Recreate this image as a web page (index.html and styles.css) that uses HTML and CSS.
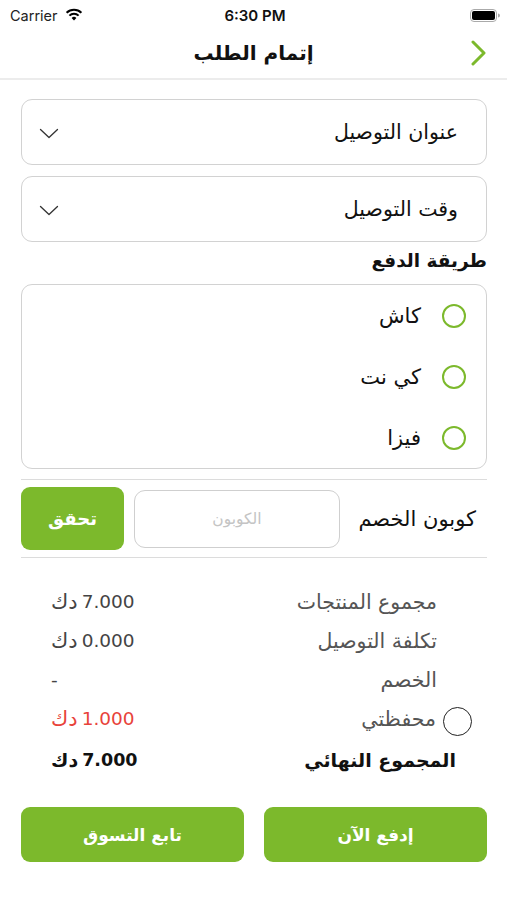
FILE: index.html
```html
<!DOCTYPE html>
<html lang="ar">
<head>
<meta charset="utf-8">
<link rel="stylesheet" href="styles.css">
</head>
<body>
<div class="status">
  <div class="st-left"><span class="carrier">Carrier</span>
    <svg class="wifi" width="18" height="13" viewBox="0 0 18 13"><path d="M9 12.5 L6.6 9.9 A3.4 3.4 0 0 1 11.4 9.9 Z" fill="#000"/><path d="M4.4 7.6 A6.6 6.6 0 0 1 13.6 7.6" stroke="#000" stroke-width="2" fill="none"/><path d="M1.6 4.8 A10.6 10.6 0 0 1 16.4 4.8" stroke="#000" stroke-width="2" fill="none"/></svg>
  </div>
  <div class="time">6:30 PM</div>
  <div class="st-right">
    <svg width="30" height="13" viewBox="0 0 30 13"><rect x="0.5" y="0.5" width="26" height="12" rx="3.5" fill="none" stroke="#aaa"/><rect x="2" y="2" width="23" height="9" rx="2" fill="#000"/><path d="M28 4.5 v4 a1.5 1.5 0 0 0 0 -4z" fill="#aaa"/></svg>
  </div>
</div>
<div class="nav" dir="rtl">
  <svg class="back" width="16" height="26" viewBox="0 0 16 26"><path d="M2 2 L13 13 L2 24" stroke="#7cb92c" stroke-width="3" fill="none" stroke-linecap="round" stroke-linejoin="round"/></svg>
  <h1 class="title">إتمام الطلب</h1>
</div>
<main class="content" dir="rtl">
  <div class="select"><span>عنوان التوصيل</span>
    <svg width="20" height="11" viewBox="0 0 20 11"><path d="M1.5 1.5 L10 9.5 L18.5 1.5" stroke="#333" stroke-width="1.3" fill="none" stroke-linecap="round" stroke-linejoin="round"/></svg>
  </div>
  <div class="select"><span>وقت التوصيل</span>
    <svg width="20" height="11" viewBox="0 0 20 11"><path d="M1.5 1.5 L10 9.5 L18.5 1.5" stroke="#333" stroke-width="1.3" fill="none" stroke-linecap="round" stroke-linejoin="round"/></svg>
  </div>
  <h2 class="section">طريقة الدفع</h2>
  <div class="paybox">
    <div class="payrow"><span class="radio"></span><span>كاش</span></div>
    <div class="payrow"><span class="radio"></span><span>كي نت</span></div>
    <div class="payrow"><span class="radio"></span><span>فيزا</span></div>
  </div>
  <div class="coupon">
    <span class="coupon-label">كوبون الخصم</span>
    <div class="coupon-input">الكوبون</div>
    <button class="btn check">تحقق</button>
  </div>
  <div class="summary">
    <div class="row"><span>مجموع المنتجات</span><span class="val"><span class="num">7.000</span><span class="cur">دك</span></span></div>
    <div class="row"><span>تكلفة التوصيل</span><span class="val"><span class="num">0.000</span><span class="cur">دك</span></span></div>
    <div class="row"><span>الخصم</span><span class="val"><span class="num">-</span></span></div>
    <div class="row wallet"><span class="wl"><span class="wcircle"></span><span>محفظتي</span></span><span class="val red"><span class="num">1.000</span><span class="cur">دك</span></span></div>
    <div class="row total"><span>المجموع النهائي</span><span class="val"><span class="num">7.000</span><span class="cur">دك</span></span></div>
  </div>
  <div class="actions">
    <button class="btn big">إدفع الآن</button>
    <button class="btn big">تابع التسوق</button>
  </div>
</main>
</body>
</html>
```
FILE: styles.css
```css
* { box-sizing: border-box; }
html, body { margin: 0; padding: 0; background: #fff; }
body { width: 507px; font-family: "DejaVu Sans", "Noto Sans", sans-serif; color: #111; }

.status { height: 30px; display: flex; align-items: center; justify-content: space-between; padding: 0 7px 0 10px; font-family: "Inter", "Liberation Sans", sans-serif; }
.st-left { display: flex; align-items: center; gap: 7px; width: 100px; }
.carrier { font-size: 14.5px; color: #222; }
.wifi { margin-top: -2px; }
.time { font-size: 15px; font-weight: 600; color: #111; }
.st-right { width: 100px; display: flex; justify-content: flex-end; }

.nav { height: 50px; display: flex; align-items: center; justify-content: center; position: relative; border-bottom: 2px solid #ececec; }
.title { margin: 0 0 2px; font-size: 20px; font-weight: bold; color: #111; }
.back { position: absolute; right: 20px; top: 10px; }

.content { padding: 19px 20px 0 21px; }
.select { height: 66px; border: 1.5px solid #d2d2d2; border-radius: 11px; display: flex; align-items: center; justify-content: space-between; padding: 0 28px 0 17px; font-size: 20.5px; margin-bottom: 11px; color: #111; }
.select svg { margin-top: 2px; }

.section { margin: -5px 0 10px; font-size: 18.5px; font-weight: bold; line-height: 26px; height: 26px; }

.paybox { border: 1.5px solid #d2d2d2; border-radius: 11px; padding: 0 20px; }
.payrow { height: 61px; display: flex; align-items: center; gap: 21px; font-size: 21px; }
.radio { width: 24px; height: 24px; border: 2.5px solid #7cb92c; border-radius: 50%; display: inline-block; }

.coupon { border-top: 1.5px solid #dcdcdc; border-bottom: 1.5px solid #dcdcdc; margin-top: 10px; padding: 7px 0; display: flex; align-items: center; gap: 10px; }
.coupon-label { flex: 1; padding-right: 11px; font-size: 21px; white-space: nowrap; }
.coupon-input { width: 206px; height: 58px; border: 1.5px solid #cfcfcf; border-radius: 11px; display: flex; align-items: center; justify-content: center; color: #c4c4c4; font-size: 15.5px; }
.btn { border: none; background: #7cb92c; color: #fff; font-family: inherit; font-weight: bold; border-radius: 9px; cursor: pointer; }
.check { width: 103px; height: 63px; font-size: 18px; }

.summary { padding-top: 24px; }
.row { height: 39px; display: flex; align-items: center; justify-content: space-between; padding: 0 50px 0 30px; font-size: 20.5px; color: #555; }
.val { display: flex; align-items: center; gap: 4px; color: #444; }
.num { font-size: 18.5px; }
.cur { font-size: 21px; }
.red { color: #e8433a; }
.wallet { padding-right: 15px; }
.wl { display: flex; align-items: center; gap: 7px; }
.wcircle { width: 29px; height: 29px; border: 1.5px solid #222; border-radius: 50%; display: inline-block; margin-top: 6px; }
.total { padding-right: 31px; color: #111; font-weight: bold; font-size: 19px; height: 42px; margin-top: 1px; }
.total .val { color: #111; font-weight: bold; }
.total .num { font-size: 17.5px; }
.total .cur { font-size: 19px; }

.actions { display: flex; gap: 20px; margin-top: 26px; }
.big { flex: 1; height: 55px; font-size: 17px; }
```
